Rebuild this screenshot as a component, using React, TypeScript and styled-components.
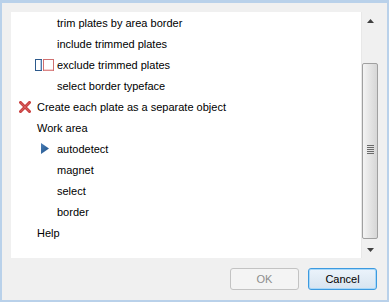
import React from "react";
import styled, { createGlobalStyle } from "styled-components";

const Global = createGlobalStyle`
  html, body { margin: 0; padding: 0; background: #f0f0f0; }
  body { font-family: "Liberation Sans", Arial, sans-serif; font-size: 11px; }
`;

const Frame = styled.div`
  box-sizing: border-box;
  width: 389px;
  height: 302px;
  border: solid #b9d1ea;
  border-width: 3px 2px 2px 2px;
  background: #f0f0f0;
  padding: 9px 9px 10px 9px;
  display: flex;
  flex-direction: column;
  gap: 10px;
`;

const ListBox = styled.div`
  height: 247px;
  background: #ffffff;
  display: flex;
`;

const Rows = styled.div`
  flex: 1;
  display: flex;
  flex-direction: column;
`;

const Row = styled.div<{ $level: number }>`
  height: 21px;
  display: flex;
  align-items: center;
  padding-left: ${(p) => (p.$level === 0 ? 26 : 46)}px;
  position: relative;
  color: #000;
  white-space: nowrap;
`;

const IconSlot = styled.span<{ $left: number }>`
  position: absolute;
  left: ${(p) => p.$left}px;
  top: 0;
  height: 21px;
  display: flex;
  align-items: center;
`;

const ScrollBar = styled.div`
  width: 17px;
  display: flex;
  flex-direction: column;
  background: #f0f0f0;
  border-left: 1px solid #e8e8e8;
  box-sizing: border-box;
`;

const ArrowBtn = styled.div`
  height: 17px;
  display: flex;
  align-items: center;
  justify-content: center;
`;

const Track = styled.div`
  flex: 1;
  display: flex;
  flex-direction: column;
  padding: 34px 0 1px 0;
`;

const Thumb = styled.div`
  height: 176px;
  box-sizing: border-box;
  border: 1px solid #a0a0a0;
  border-radius: 2px;
  background: linear-gradient(to right, #f4f4f4 0%, #e6e6e6 45%, #d6d6d6 100%);
  display: flex;
  align-items: center;
  justify-content: center;
`;

const Grip = styled.div`
  width: 7px;
  height: 9px;
  background: repeating-linear-gradient(
    to bottom,
    #6a6a6a 0px,
    #6a6a6a 1px,
    transparent 1px,
    transparent 2px
  );
  margin-top: -4px;
`;

const ButtonRow = styled.div`
  display: flex;
  justify-content: flex-end;
  gap: 9px;
  padding-right: 1px;
`;

const Button = styled.button<{ $primary?: boolean }>`
  width: 69px;
  height: 22px;
  box-sizing: border-box;
  font-family: inherit;
  font-size: 11px;
  border-radius: 3px;
  padding: 0;
  border: 1px solid ${(p) => (p.$primary ? "#3c9ae0" : "#c3c3c3")};
  color: ${(p) => (p.$primary ? "#000" : "#8d8d8d")};
  background: ${(p) =>
    p.$primary ? "linear-gradient(#ebf3fb, #d7e4f0)" : "#f4f4f4"};
  box-shadow: ${(p) => (p.$primary ? "inset 0 0 0 1px #a8d8f8" : "none")};
`;

const XIcon = () => (
  <svg width="12" height="12" viewBox="0 0 12 12">
    <path d="M1.5 1.5 L10.5 10.5 M10.5 1.5 L1.5 10.5" stroke="#c94040" strokeWidth="3" strokeLinecap="square" />
    <path d="M1.5 1.5 L10.5 10.5 M10.5 1.5 L1.5 10.5" stroke="#e07070" strokeWidth="1" opacity="0.6" />
  </svg>
);

const Triangle = () => (
  <svg width="8" height="11" viewBox="0 0 8 11">
    <defs>
      <linearGradient id="tg" x1="0" y1="0" x2="1" y2="1">
        <stop offset="0" stopColor="#4b7fb8" />
        <stop offset="1" stopColor="#1d4f86" />
      </linearGradient>
    </defs>
    <polygon points="0,0 8,5.5 0,11" fill="url(#tg)" />
  </svg>
);

const CheckIcon = () => (
  <svg width="20" height="12" viewBox="0 0 20 12">
    <rect x="0.5" y="0.5" width="6" height="11" fill="#ffffff" stroke="#2d5a8c" />
    <line x1="6" y1="1" x2="6" y2="11" stroke="#6f9bc9" />
    <rect x="8.5" y="0.5" width="10" height="11" fill="#ffffff" stroke="#d07070" />
    <line x1="9" y1="11" x2="18" y2="11" stroke="#e8a0a0" />
  </svg>
);

const UpArrow = () => (
  <svg width="7" height="4" viewBox="0 0 7 4">
    <polygon points="0,4 3.5,0 7,4" fill="#404040" />
  </svg>
);
const DownArrow = () => (
  <svg width="7" height="4" viewBox="0 0 7 4">
    <polygon points="0,0 3.5,4 7,0" fill="#404040" />
  </svg>
);

type Item = { text: string; level: number; icon?: "x" | "tri" | "check" };

const items: Item[] = [
  { text: "trim plates by area border", level: 1 },
  { text: "include trimmed plates", level: 1 },
  { text: "exclude trimmed plates", level: 1, icon: "check" },
  { text: "select border typeface", level: 1 },
  { text: "Create each plate as a separate object", level: 0, icon: "x" },
  { text: "Work area", level: 0 },
  { text: "autodetect", level: 1, icon: "tri" },
  { text: "magnet", level: 1 },
  { text: "select", level: 1 },
  { text: "border", level: 1 },
  { text: "Help", level: 0 },
];

export default function App() {
  return (
    <>
      <Global />
      <Frame>
        <ListBox>
          <Rows>
            {items.map((it, i) => (
              <Row key={i} $level={it.level}>
                {it.icon === "x" && (
                  <IconSlot $left={8}>
                    <XIcon />
                  </IconSlot>
                )}
                {it.icon === "tri" && (
                  <IconSlot $left={30}>
                    <Triangle />
                  </IconSlot>
                )}
                {it.icon === "check" && (
                  <IconSlot $left={24}>
                    <CheckIcon />
                  </IconSlot>
                )}
                {it.text}
              </Row>
            ))}
          </Rows>
          <ScrollBar>
            <ArrowBtn>
              <UpArrow />
            </ArrowBtn>
            <Track>
              <Thumb>
                <Grip />
              </Thumb>
            </Track>
            <ArrowBtn>
              <DownArrow />
            </ArrowBtn>
          </ScrollBar>
        </ListBox>
        <ButtonRow>
          <Button disabled>OK</Button>
          <Button $primary>Cancel</Button>
        </ButtonRow>
      </Frame>
    </>
  );
}
